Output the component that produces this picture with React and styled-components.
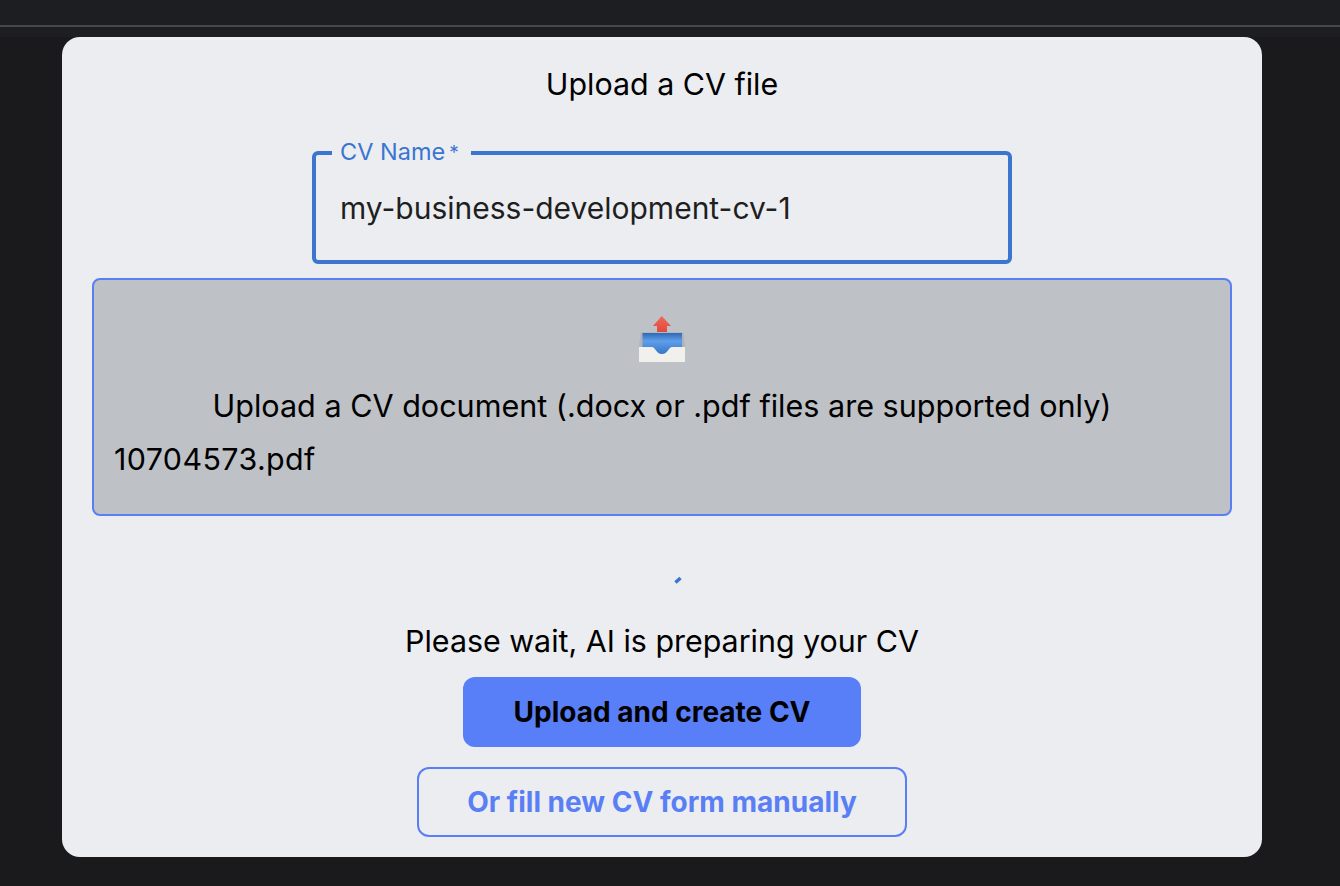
import React from "react";
import styled, { createGlobalStyle } from "styled-components";

const GlobalStyle = createGlobalStyle`
  html, body {
    margin: 0;
    padding: 0;
    background: #1a1a1c;
    font-family: "Inter", "Liberation Sans", sans-serif;
  }
`;

const Page = styled.div`
  width: 1340px;
  height: 886px;
  overflow: hidden;
  box-sizing: border-box;
  display: flex;
  flex-direction: column;
  background: #1a1a1c;
`;

const TopBar = styled.div`
  height: 37px;
  flex: none;
  box-sizing: border-box;
  padding-top: 25px;
  background: #1d1e22;
`;

const TopLine = styled.div`
  height: 2px;
  background: #46464e;
`;

const Card = styled.main`
  width: 1200px;
  height: 820px;
  margin-left: 62px;
  box-sizing: border-box;
  padding: 29px 30px 0;
  display: flex;
  flex-direction: column;
  align-items: center;
  background: #ebedf1;
  border-radius: 18px;
`;

const Title = styled.h2`
  margin: 0;
  font-size: 30.4px;
  line-height: 36px;
  font-weight: 400;
  color: #000;
`;

const NameField = styled.fieldset`
  width: 700px;
  height: 126px;
  margin: 36px 0 0;
  padding: 0 24px;
  box-sizing: border-box;
  border: 4px solid #3a75d0;
  border-radius: 6px;
`;

const NameLegend = styled.legend`
  margin-left: -8px;
  padding: 0 12px 0 8px;
  font-size: 23.5px;
  line-height: 28px;
  color: #3a75d0;
`;

const Required = styled.span`
  margin-left: 4px;
  font-size: 19px;
  vertical-align: 1px;
`;

const NameValue = styled.div`
  margin-top: 23px;
  font-size: 30px;
  line-height: 36px;
  color: #1f1f1f;
`;

const DropZone = styled.section`
  width: 1140px;
  height: 238px;
  margin-top: 14px;
  box-sizing: border-box;
  padding: 36px 20px 0;
  display: flex;
  flex-direction: column;
  background: #bec1c6;
  border: 2px solid #5a7ff5;
  border-radius: 8px;
  color: #000;
`;

const TrayIcon = styled.svg`
  width: 46px;
  height: 46px;
  align-self: center;
  flex: none;
`;

const DropText = styled.div`
  margin-top: 26px;
  font-size: 30.55px;
  line-height: 36px;
  text-align: center;
`;

const FileName = styled.div`
  margin-top: 17px;
  font-size: 30.4px;
  line-height: 36px;
  letter-spacing: 0.4px;
`;

const Spinner = styled.svg`
  width: 10px;
  height: 10px;
  margin-top: 59px;
  margin-left: 32px;
  flex: none;
`;

const WaitText = styled.div`
  margin-top: 38px;
  font-size: 30.4px;
  line-height: 36px;
  color: #000;
`;

const PrimaryButton = styled.button`
  width: 398px;
  height: 70px;
  margin-top: 18px;
  flex: none;
  border: none;
  border-radius: 12px;
  background: #587ef8;
  color: #000;
  font-family: inherit;
  font-size: 28px;
  font-weight: 700;
`;

const OutlineButton = styled.button`
  width: 490px;
  height: 70px;
  margin-top: 20px;
  flex: none;
  box-sizing: border-box;
  border: 2px solid #5a7ff5;
  border-radius: 12px;
  background: transparent;
  color: #5a7ff5;
  font-family: inherit;
  font-size: 28px;
  font-weight: 700;
`;

const App = () => (
  <>
    <GlobalStyle />
    <Page>
      <TopBar>
        <TopLine />
      </TopBar>
      <Card>
        <Title>Upload a CV file</Title>
        <NameField>
          <NameLegend>
            CV Name<Required>*</Required>
          </NameLegend>
          <NameValue>my-business-development-cv-1</NameValue>
        </NameField>
        <DropZone>
          <TrayIcon viewBox="0 0 46 46">
            <defs>
              <linearGradient id="tray" x1="0" y1="0" x2="0" y2="1">
                <stop offset="0" stopColor="#2f68b4" />
                <stop offset="0.35" stopColor="#5f9eea" />
                <stop offset="1" stopColor="#2f70c0" />
              </linearGradient>
              <linearGradient id="arrow" x1="0" y1="0" x2="0" y2="1">
                <stop offset="0" stopColor="#ee6a5c" />
                <stop offset="1" stopColor="#e2483c" />
              </linearGradient>
            </defs>
            <path d="M22.700 0 L32 10 L28 10 L28 16 L18 16 L18 10 L14 10 Z" fill="url(#arrow)" />
            <path d="M1.700 16.300 L44.300 16.300 L46 31 L0 31 Z" fill="#b0b3b7" />
            <rect x="3.500" y="17" width="39.500" height="23" fill="url(#tray)" />
            <path d="M0 31 L12.700 31 C16.500 31 17 38 23 38 C29 38 29.500 31 33.300 31 L46 31 L46 46 L0 46 Z" fill="#f1f0ec" />
          </TrayIcon>
          <DropText>Upload a CV document (.docx or .pdf files are supported only)</DropText>
          <FileName>10704573.pdf</FileName>
        </DropZone>
        <Spinner viewBox="0 0 10 10">
          <path d="M2.500 7.500 L7.500 3" stroke="#3a75d0" strokeWidth="3.500" fill="none" />
        </Spinner>
        <WaitText>Please wait, AI is preparing your CV</WaitText>
        <PrimaryButton>Upload and create CV</PrimaryButton>
        <OutlineButton>Or fill new CV form manually</OutlineButton>
      </Card>
    </Page>
  </>
);

export default App;
